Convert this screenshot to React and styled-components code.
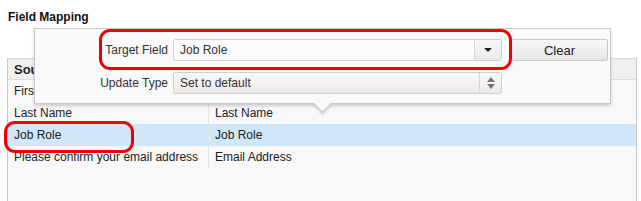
import React from "react";
import styled, { createGlobalStyle } from "styled-components";

const Global = createGlobalStyle`
  html, body {
    margin: 0;
    padding: 0;
    background: #ffffff;
  }
  body {
    font-family: "Liberation Sans", Arial, sans-serif;
    font-size: 12px;
    color: #222;
  }
`;

const Page = styled.div`
  position: relative;
  width: 641px;
  height: 201px;
  overflow: hidden;
  padding: 0 4px 0 7px;
  box-sizing: border-box;
  display: flex;
  flex-direction: column;
`;

const Heading = styled.h3`
  margin: 0;
  padding: 10px 0 0 1px;
  height: 58px;
  flex-shrink: 0;
  box-sizing: border-box;
  font-size: 12px;
  font-weight: bold;
  color: #111;
`;

const Table = styled.div`
  flex: 1;
  border-left: 1px solid #c8c8c8;
  border-right: 1px solid #c8c8c8;
  background: #f8f8f8;
`;

const Row = styled.div`
  display: grid;
  grid-template-columns: 200px 1fr;
  height: ${(p) => (p.$head ? "20px" : "22px")};
  align-items: stretch;
  background: ${(p) => (p.$selected ? "#d0e6f9" : p.$head ? "#f0f0f0" : "transparent")};
  border-top: ${(p) => (p.$head ? "1px solid #d6d6d6" : "none")};
  border-bottom: ${(p) => (p.$head ? "1px solid #dedede" : "none")};
  font-weight: ${(p) => (p.$head ? "bold" : "normal")};
  font-size: ${(p) => (p.$head ? "13px" : "12px")};
`;

const Cell = styled.div`
  display: flex;
  align-items: center;
  padding-left: 6px;
  border-left: ${(p) => (p.$second ? "1px solid #e4e4e4" : "none")};
  white-space: nowrap;
  overflow: hidden;
`;

const Popover = styled.div`
  position: absolute;
  left: 34px;
  top: 28px;
  width: 577px;
  height: 76px;
  box-sizing: border-box;
  background: #f9f9f9;
  border: 1px solid #c9c9c9;
  box-shadow: 0 2px 3px rgba(0, 0, 0, 0.18);
  padding: 10px 0 0 0;
  display: flex;
  flex-direction: column;
  gap: 11px;

  &::after {
    content: "";
    position: absolute;
    left: 281px;
    bottom: -7px;
    width: 12px;
    height: 12px;
    background: #f9f9f9;
    border-right: 1px solid #c9c9c9;
    border-bottom: 1px solid #c9c9c9;
    transform: rotate(45deg);
    box-shadow: 2px 2px 2px rgba(0, 0, 0, 0.12);
  }
`;

const FormRow = styled.div`
  display: flex;
  align-items: center;
  height: 22px;
`;

const Label = styled.label`
  width: 138px;
  text-align: right;
  padding-right: 5px;
  box-sizing: border-box;
  font-size: 12px;
  color: #333;
`;

const Field = styled.div`
  position: relative;
  display: flex;
  width: 329px;
  height: 22px;
  box-sizing: border-box;
  border: 1px solid #cdd1d6;
  border-radius: 2px;
  background: ${(p) => (p.$select ? "linear-gradient(#fafafa, #e9e9e9)" : "#fbfbfb")};
  font-size: 12px;
  color: #333;
`;

const FieldText = styled.span`
  flex: 1;
  display: flex;
  align-items: center;
  padding-left: 6px;
`;

const FieldButton = styled.span`
  width: ${(p) => p.$w}px;
  border-left: 1px solid #d4d7db;
  background: ${(p) => (p.$plain ? "transparent" : "linear-gradient(#f7f7f7, #e8e8e8)")};
  display: flex;
  flex-direction: column;
  align-items: center;
  justify-content: center;
  gap: 2px;
`;

const Arrow = styled.span`
  width: 0;
  height: 0;
  border-left: 4px solid transparent;
  border-right: 4px solid transparent;
  ${(p) =>
    p.$up
      ? `border-bottom: 5px solid ${p.$color};`
      : `border-top: ${p.$big ? 4 : 5}px solid ${p.$color};`}
`;

const Button = styled.button`
  margin-left: 9px;
  width: 97px;
  height: 22px;
  box-sizing: border-box;
  border: 1px solid #c6cacf;
  border-radius: 2px;
  background: linear-gradient(#f8f8f8, #e6e6e6);
  font-family: "Liberation Sans", Arial, sans-serif;
  font-size: 13px;
  color: #222;
  padding: 0;
`;

const Highlight = styled.div`
  position: absolute;
  left: ${(p) => p.$x}px;
  top: ${(p) => p.$y}px;
  width: ${(p) => p.$w}px;
  height: ${(p) => p.$h}px;
  box-sizing: border-box;
  border: 3px solid #ee0000;
  border-radius: 11px;
  pointer-events: none;
`;

const rows = [
  ["First Name", "First Name"],
  ["Last Name", "Last Name"],
  ["Job Role", "Job Role"],
  ["Please confirm your email address", "Email Address"],
];

export default function App() {
  return (
    <Page>
      <Global />
      <Heading>Field Mapping</Heading>
      <Table>
        <Row $head>
          <Cell>Source Field</Cell>
          <Cell $second>Target Field</Cell>
        </Row>
        {rows.map(([a, b]) => (
          <Row key={a} $selected={a === "Job Role"}>
            <Cell>{a}</Cell>
            <Cell $second>{b}</Cell>
          </Row>
        ))}
      </Table>

      <Popover>
        <FormRow>
          <Label>Target Field</Label>
          <Field>
            <FieldText>Job Role</FieldText>
            <FieldButton $w={26}>
              <Arrow $color="#222" $big />
            </FieldButton>
          </Field>
          <Button>Clear</Button>
        </FormRow>
        <FormRow>
          <Label>Update Type</Label>
          <Field $select>
            <FieldText>Set to default</FieldText>
            <FieldButton $w={21} $plain>
              <Arrow $up $color="#777" />
              <Arrow $color="#777" />
            </FieldButton>
          </Field>
        </FormRow>
      </Popover>

      <Highlight $x={99} $y={29} $w={413} $h={41} />
      <Highlight $x={4} $y={121} $w={130} $h={32} />
    </Page>
  );
}
